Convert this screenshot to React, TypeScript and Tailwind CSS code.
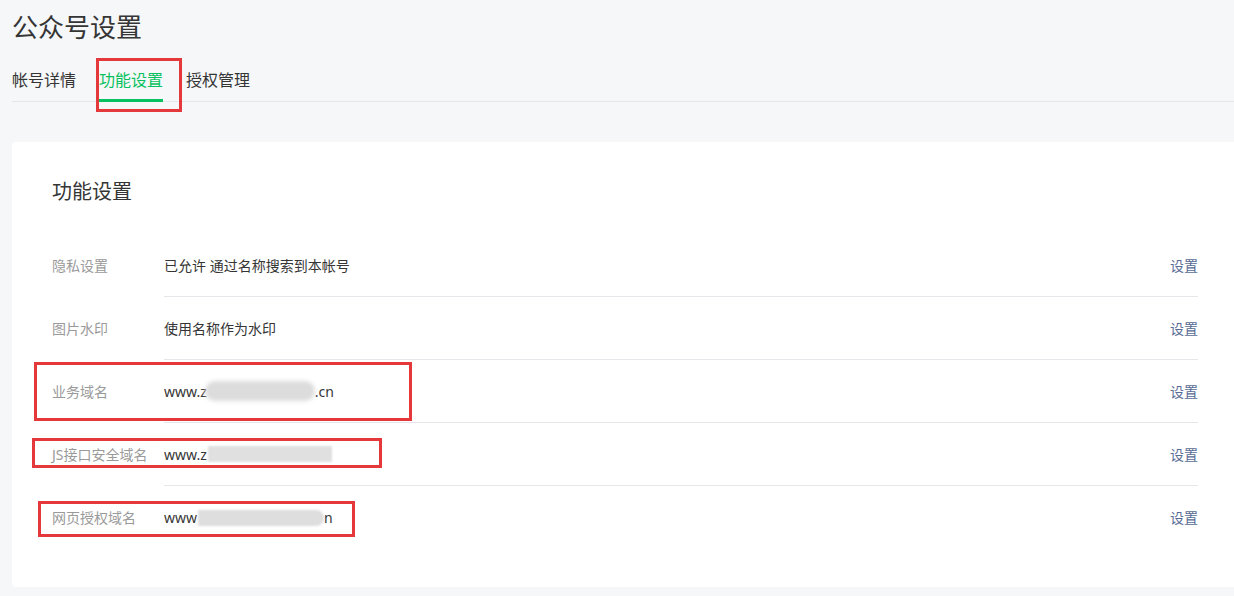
const rows = [
  { label: "隐私设置", value: "已允许 通过名称搜索到本帐号" },
  { label: "图片水印", value: "使用名称作为水印" },
  { label: "业务域名", value: "domain1" },
  { label: "JS接口安全域名", value: "domain2" },
  { label: "网页授权域名", value: "domain3" },
];

const Masked = ({ kind }: { kind: string }) => {
  if (kind === "domain1") {
    return (
      <span className="flex items-center">
        <span>www.z</span>
        <span className="ml-[-2px] h-[20px] w-[110px] rounded-full bg-[#dcdcdc] blur-[2px]" />
        <span>.cn</span>
      </span>
    );
  }
  if (kind === "domain2") {
    return (
      <span className="flex items-center">
        <span>www.z</span>
        <span className="ml-[1px] h-[16px] w-[124px] bg-[#e0e0e0] blur-[1px]" />
      </span>
    );
  }
  if (kind === "domain3") {
    return (
      <span className="flex items-center">
        <span>www</span>
        <span className="ml-[1px] h-[16px] w-[126px] rounded-r-full bg-[#dedede] blur-[1px]" />
        <span>n</span>
      </span>
    );
  }
  return <span>{kind}</span>;
};

const App = () => {
  return (
    <div
      className="relative h-[596px] w-[1234px] overflow-hidden bg-[#f6f7f9]"
      style={{ fontFamily: '"Noto Sans", "Noto Sans CJK SC", sans-serif' }}
    >
      {/* Page header */}
      <div className="pl-3">
        <h1 className="pt-[8px] text-[26px] leading-[38px] text-[#353535]">公众号设置</h1>
        <div className="mt-[22px] flex gap-[23px] border-b border-[#e4e6e9] text-[16px] text-[#353535]">
          <span className="pb-[9px] leading-[24px]">帐号详情</span>
          <span className="mb-[-1px] border-b-[3px] border-[#07c160] pb-[7px] leading-[24px] text-[#07c160]">功能设置</span>
          <span className="pb-[9px] leading-[24px]">授权管理</span>
        </div>
      </div>

      {/* Card */}
      <div className="ml-3 mt-[40px] w-[1234px] rounded-[4px] bg-white pb-[38px] pl-[40px] pr-[48px] pt-[36px]">
        <h2 className="text-[20px] leading-[28px] text-[#353535]">功能设置</h2>
        <div className="mt-[28px]">
          {rows.map((row, i) => (
            <div key={row.label} className="flex h-[63px] items-stretch text-[14px]">
              <div className="flex w-[112px] shrink-0 items-center text-[#9a9a9a]">{row.label}</div>
              <div
                className={`flex flex-1 items-center justify-between ${
                  i < rows.length - 1 ? "border-b border-[#e7e7eb]" : ""
                }`}
              >
                <span className="flex items-center text-[#353535]">
                  <Masked kind={row.value} />
                </span>
                <span className="text-[#576b95]">设置</span>
              </div>
            </div>
          ))}
        </div>
      </div>

      {/* Red annotation boxes */}
      <div className="absolute left-[96px] top-[58px] h-[54px] w-[86px] border-[3px] border-[#e5383b]" />
      <div className="absolute left-[34px] top-[362px] h-[59px] w-[378px] border-[3px] border-[#e5383b]" />
      <div className="absolute left-[32px] top-[438px] h-[30px] w-[350px] border-[3px] border-[#e5383b]" />
      <div className="absolute left-[38px] top-[501px] h-[36px] w-[317px] border-[3px] border-[#e5383b]" />
    </div>
  );
};

export default App;
